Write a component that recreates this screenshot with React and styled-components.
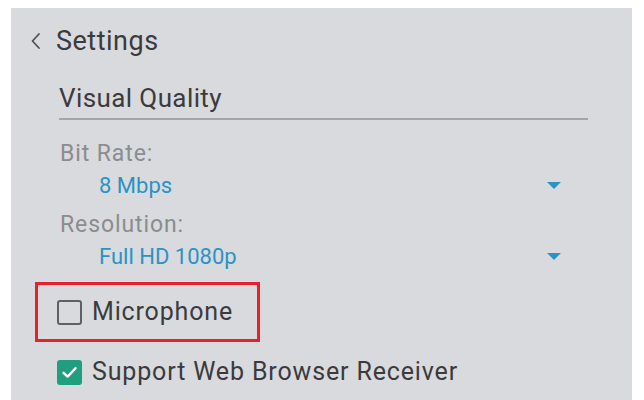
import React from 'react';
import styled, { createGlobalStyle } from 'styled-components';

const GlobalStyle = createGlobalStyle`
  html, body {
    margin: 0;
    padding: 0;
    background: #ffffff;
    font-family: Roboto, "Liberation Sans", sans-serif;
  }
`;

const Panel = styled.div`
  box-sizing: border-box;
  margin: 8px 12px 0 11px;
  height: 392px;
  background: #d9dadd;
  padding: 18px 44px 0 19px;
  overflow: hidden;
`;

const Header = styled.div`
  display: flex;
  align-items: center;
  height: 30px;
  gap: 10px;
`;

const HeaderTitle = styled.span`
  font-size: 27px;
  line-height: 30px;
  letter-spacing: 0.5px;
  color: #3b3b3d;
`;

const Section = styled.div`
  margin-top: 27px;
  margin-left: 29px;
`;

const SectionTitle = styled.div`
  font-size: 26px;
  line-height: 30px;
  letter-spacing: 0.4px;
  color: #3b3b3d;
  padding-bottom: 5px;
  border-bottom: 2px solid #a4a5a8;
`;

const Field = styled.div`
  margin-top: ${({ $first }) => ($first ? '21px' : '13px')};
  padding-left: 1px;
`;

const Label = styled.div`
  font-size: 23px;
  line-height: 26px;
  letter-spacing: 0.9px;
  color: #8b8c8e;
`;

const ValueRow = styled.div`
  display: flex;
  align-items: center;
  justify-content: space-between;
  margin-top: 6px;
  padding-left: 39px;
  padding-right: 27px;
`;

const Value = styled.span`
  font-size: 22px;
  line-height: 26px;
  color: #2a93c6;
`;

const Caret = styled.span`
  width: 0;
  height: 0;
  border-left: 7px solid transparent;
  border-right: 7px solid transparent;
  border-top: 7px solid #2a93c6;
  margin-top: -2px;
`;

const CheckRow = styled.div`
  box-sizing: border-box;
  display: flex;
  align-items: center;
  gap: 10px;
  width: ${({ $outlined }) => ($outlined ? '225px' : 'auto')};
  height: ${({ $outlined }) => ($outlined ? '60px' : '40px')};
  margin-top: ${({ $outlined }) => ($outlined ? '12px' : '10px')};
  margin-left: -3px;
  padding-left: 19px;
  border: 3px solid ${({ $outlined }) => ($outlined ? '#e8202b' : 'transparent')};
`;

const Box = styled.span`
  box-sizing: border-box;
  display: inline-flex;
  align-items: center;
  justify-content: center;
  width: 25px;
  height: 25px;
  border-radius: 3px;
  border: ${({ $checked }) => ($checked ? 'none' : '2.5px solid #5f6063')};
  background: ${({ $checked }) => ($checked ? '#1f9f7e' : 'transparent')};
`;

const CheckText = styled.span`
  font-size: 25px;
  line-height: 28px;
  letter-spacing: 0.85px;
  color: #3b3b3d;
`;

const Content = styled.div`
  margin-left: 8px;
`;

function Checkbox({ checked, label, outlined }) {
  return (
    <CheckRow $outlined={outlined}>
      <Box $checked={checked}>
        {checked && (
          <svg width="19" height="19" viewBox="0 0 19 19">
            <path d="M3.5 9.8 L7.6 13.6 L15.5 5.2" fill="none" stroke="#ffffff" strokeWidth="2.4" strokeLinecap="round" strokeLinejoin="round" />
          </svg>
        )}
      </Box>
      <CheckText>{label}</CheckText>
    </CheckRow>
  );
}

export default function App() {
  return (
    <>
      <GlobalStyle />
      <Panel>
        <Header>
          <svg width="16" height="18" viewBox="0 0 16 18">
            <path d="M9 2 L2.5 9 L9 16" fill="none" stroke="#505153" strokeWidth="1.8" strokeLinecap="round" strokeLinejoin="round" />
          </svg>
          <HeaderTitle>Settings</HeaderTitle>
        </Header>
        <Section>
          <SectionTitle>Visual Quality</SectionTitle>
          <Field $first>
            <Label>Bit Rate:</Label>
            <ValueRow>
              <Value>8 Mbps</Value>
              <Caret />
            </ValueRow>
          </Field>
          <Field>
            <Label>Resolution:</Label>
            <ValueRow>
              <Value>Full HD 1080p</Value>
              <Caret />
            </ValueRow>
          </Field>
        </Section>
        <Content>
          <Checkbox label="Microphone" outlined />
          <Checkbox label="Support Web Browser Receiver" checked />
        </Content>
      </Panel>
    </>
  );
}
